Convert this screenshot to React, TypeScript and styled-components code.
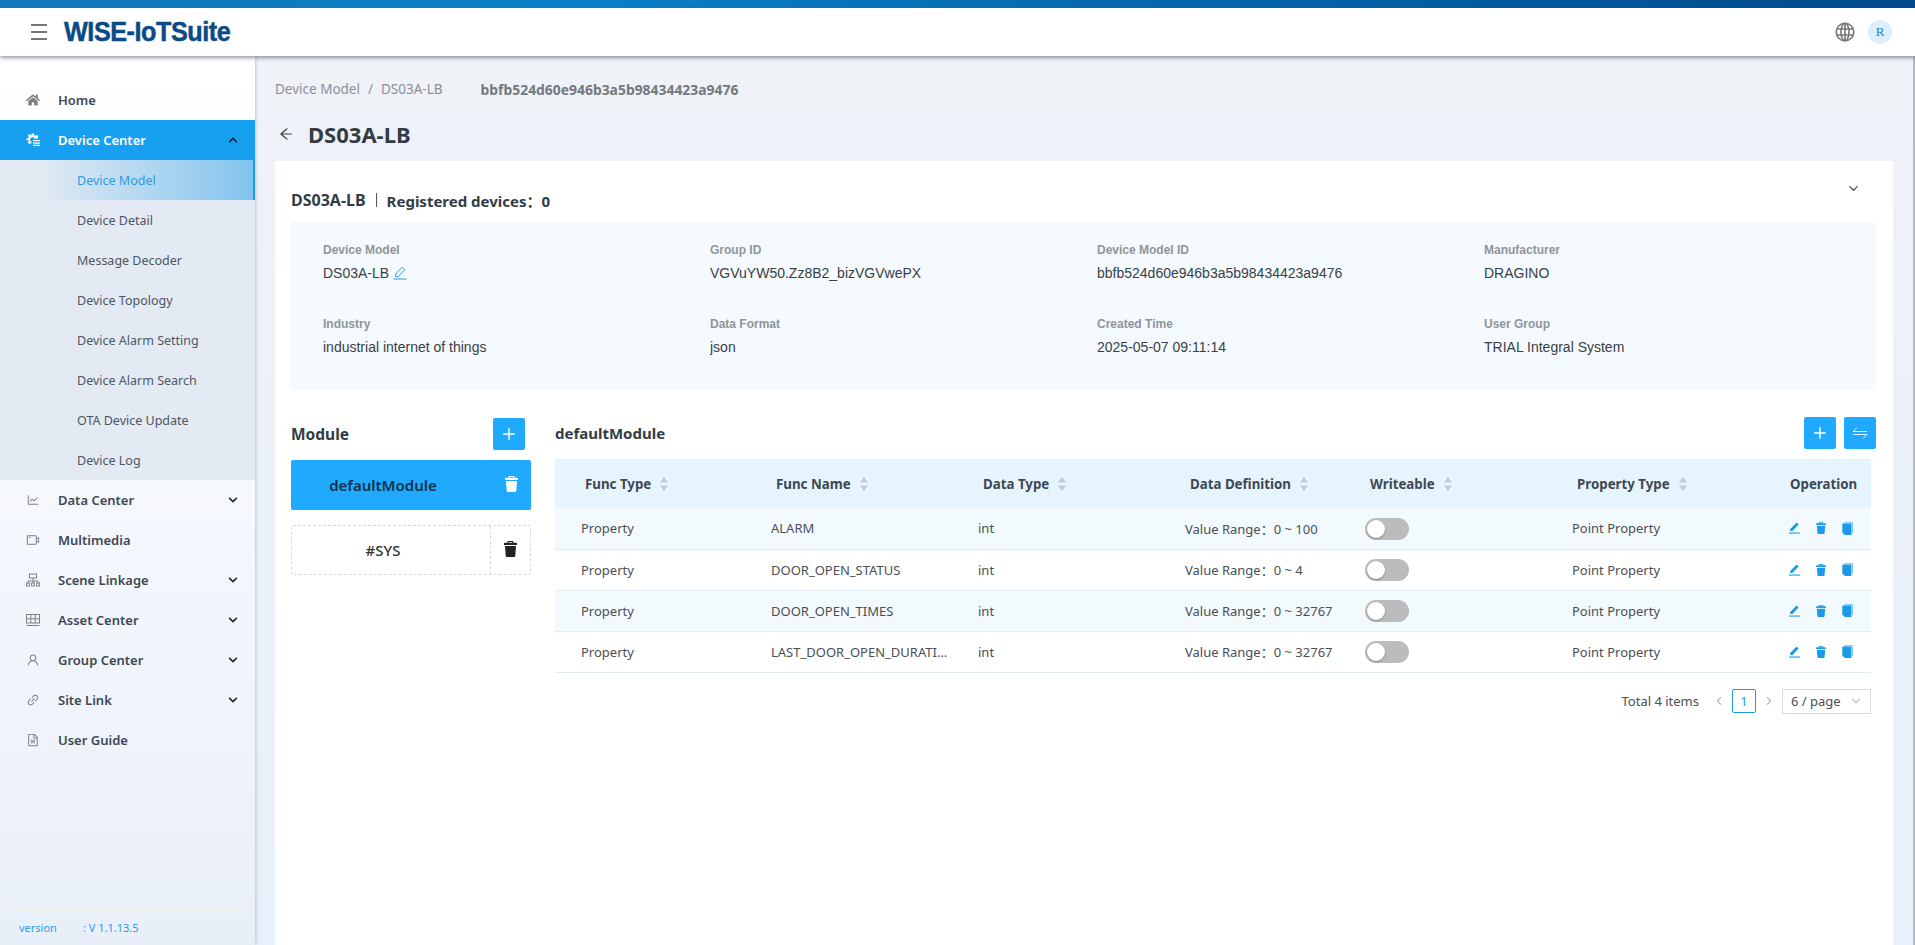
import React from "react";
import styled, { createGlobalStyle } from "styled-components";
import {
  AiOutlineArrowLeft,
  AiOutlineFileWord,
  AiOutlineLineChart,
  AiOutlineLink,
  AiOutlineUser,
  AiOutlineVideoCamera,
} from "react-icons/ai";
import { FaChevronDown, FaChevronUp, FaHome } from "react-icons/fa";
import { LuChevronDown, LuChevronLeft, LuChevronRight, LuPlus } from "react-icons/lu";

const GlobalStyle = createGlobalStyle`
  html, body {
    margin: 0;
    height: 100%;
    overflow: hidden;
  }
  body {
    font-family: "Noto Sans", "Noto Sans CJK SC", sans-serif;
    font-size: 13px;
    color: #444;
  }
  * {
    box-sizing: border-box;
  }
`;

const Page = styled.div`
  height: 945px;
  display: flex;
  flex-direction: column;
  overflow: hidden;
`;

const TopStripe = styled.div`
  height: 8px;
  flex: none;
  background: linear-gradient(90deg, #1379ba 0%, #0a80c8 30%, #004a8c 100%);
`;

const Header = styled.header`
  height: 48px;
  flex: none;
  display: flex;
  align-items: center;
  background: #fff;
  box-shadow: 0 2px 4px rgba(60, 70, 90, 0.55);
  padding: 0 23px 0 31px;
  position: relative;
  z-index: 3;
`;

const Burger = styled.div`
  width: 16px;
  display: flex;
  flex-direction: column;
  gap: 5px;
  margin-right: 17px;
  span {
    display: block;
    height: 2px;
    background: #777;
  }
`;

const Logo = styled.div`
  font-family: "Liberation Sans", sans-serif;
  font-weight: 700;
  font-size: 28px;
  color: #0a4a86;
  -webkit-text-stroke: 0.5px #0a4a86;
  transform: scaleX(0.9);
  transform-origin: left center;
  letter-spacing: -0.5px;
  white-space: nowrap;
`;

const HeaderRight = styled.div`
  margin-left: auto;
  display: flex;
  align-items: center;
  gap: 13px;
`;

const Avatar = styled.div`
  width: 24px;
  height: 24px;
  border-radius: 50%;
  background: #dfeefb;
  color: #1f7fc4;
  font-family: "Liberation Serif", serif;
  font-size: 13px;
  display: flex;
  align-items: center;
  justify-content: center;
`;

const Body = styled.div`
  flex: 1;
  min-height: 0;
  display: flex;
`;

const Sidebar = styled.aside`
  width: 255px;
  flex: none;
  padding-top: 24px;
  display: flex;
  flex-direction: column;
  background: linear-gradient(180deg, #fff 0%, #f4f7fd 55%, #e9eff8 100%);
  box-shadow: 1px 0 3px rgba(90, 110, 140, 0.3);
  position: relative;
  z-index: 2;
`;

const MenuItem = styled.div<{ $active?: boolean }>`
  height: 40px;
  flex: none;
  display: flex;
  align-items: center;
  padding: 0 17px 0 26px;
  font-weight: 600;
  font-size: 13px;
  color: ${(p) => (p.$active ? "#fff" : "#3e4854")};
  background: ${(p) => (p.$active ? "#18a0f0" : "transparent")};
  svg.lead {
    width: 14px;
    height: 14px;
    color: ${(p) => (p.$active ? "#fff" : "#808080")};
    margin-right: 18px;
    flex: none;
  }
  svg.caret {
    width: 10px;
    height: 10px;
    margin-left: auto;
    color: ${(p) => (p.$active ? "#123" : "#1f2933")};
  }
`;

const SubMenu = styled.div`
  background: #e3eaf3;
  display: flex;
  flex-direction: column;
`;

const SubItem = styled.div<{ $active?: boolean }>`
  height: 40px;
  display: flex;
  align-items: center;
  padding-left: 77px;
  font-size: 12.5px;
  color: ${(p) => (p.$active ? "#2b9be6" : "#4d5763")};
  background: ${(p) =>
    p.$active ? "linear-gradient(90deg, rgba(130,196,238,0) 15%, #82c4ee 100%)" : "none"};
  border-right: ${(p) => (p.$active ? "2px solid #1c9ae8" : "none")};
`;

const Version = styled.div`
  margin: auto 12px 2px 19px;
  height: 33px;
  display: flex;
  align-items: center;
  border-top: 1px solid #eef0ea;
  font-size: 11px;
  color: #2b9be6;
  span:first-child {
    width: 64px;
  }
`;

const Main = styled.main`
  flex: 1;
  min-width: 0;
  padding: 0 20px 0 20px;
  background: linear-gradient(180deg, #eff2f7 0%, #e8f0fb 100%);
  border-right: 2px solid #b4b8c2;
  display: flex;
  flex-direction: column;
`;

const Crumbs = styled.div`
  height: 24px;
  margin-top: 21px;
  display: flex;
  align-items: center;
  font-size: 13.5px;
  color: #8a9098;
  flex: none;
`;

const CrumbSep = styled.span`
  margin: 0 8px;
`;

const CrumbId = styled.span`
  margin-left: 38px;
  font-size: 13.9px;
  font-weight: 700;
  color: #73797f;
`;

const PageTitle = styled.div`
  height: 32px;
  margin-top: 17px;
  display: flex;
  align-items: center;
  flex: none;
  font-size: 22px;
  font-weight: 700;
  color: #333c45;
  svg {
    width: 16px;
    height: 16px;
    margin: 0 14px 0 3px;
    color: #444;
  }
`;

const Card = styled.section`
  flex: 1;
  margin-top: 11px;
  background: #fff;
  padding: 27px 17px 0 16px;
`;

const CardHead = styled.div`
  height: 24px;
  display: flex;
  align-items: center;
  font-weight: 700;
  font-size: 15px;
  color: #333c45;
  svg {
    margin-left: auto;
    margin-right: 15px;
    margin-top: -24px;
    width: 15px;
    height: 15px;
    color: #444;
  }
`;

const CardModel = styled.span`
  font-size: 16px;
`;

const CardDivider = styled.span`
  width: 1px;
  height: 14px;
  background: #555;
  margin: 0 10px;
`;

const DetailPanel = styled.div`
  margin-top: 10px;
  height: 168px;
  padding: 18px 0 0 32px;
  background: #f4fafd;
  display: grid;
  grid-template-columns: repeat(4, 387px);
  grid-auto-rows: 74px;
`;

const DetailLabel = styled.div`
  font-family: "Liberation Sans", sans-serif;
  font-size: 12px;
  font-weight: 700;
  line-height: 20px;
  color: #8f959b;
`;

const DetailValue = styled.div`
  margin-top: 3px;
  font-family: "Liberation Sans", sans-serif;
  font-size: 14px;
  line-height: 20px;
  color: #3a3f45;
  display: flex;
  align-items: center;
  gap: 4px;
`;

const Columns = styled.div`
  margin-top: 27px;
  display: flex;
  gap: 24px;
`;

const ModuleColumn = styled.div`
  width: 240px;
  flex: none;
  padding-top: 1px;
`;

const SectionHead = styled.div`
  height: 32px;
  display: flex;
  align-items: center;
  justify-content: space-between;
  font-weight: 700;
  font-size: 15px;
  color: #333c45;
`;

const ModuleHead = styled(SectionHead)`
  padding-right: 6px;
  margin-bottom: 10px;
  font-size: 15.5px;
`;

const BlueButton = styled.button`
  width: 32px;
  height: 32px;
  padding: 0;
  border: 0;
  border-radius: 2px;
  background: #1faaff;
  color: #fff;
  display: flex;
  align-items: center;
  justify-content: center;
  svg {
    width: 18px;
    height: 18px;
  }
`;

const ModuleRow = styled.div<{ $active?: boolean }>`
  height: 50px;
  display: flex;
  margin-bottom: 15px;
  border-radius: 2px;
  color: ${(p) => (p.$active ? "#12304a" : "#333")};
  background: ${(p) => (p.$active ? "#1faaff" : "#fff")};
  border: ${(p) => (p.$active ? "0" : "1px dashed #d9d9d9")};
  font-size: 15px;
  font-weight: ${(p) => (p.$active ? 600 : 500)};
`;

const ModuleName = styled.div`
  flex: 1;
  display: flex;
  align-items: center;
  justify-content: center;
  padding-right: 16px;
`;

const ModuleDelete = styled.div<{ $active?: boolean }>`
  width: 40px;
  flex: none;
  display: flex;
  align-items: center;
  justify-content: center;
  padding-bottom: 3px;
  border-left: ${(p) => (p.$active ? "1px solid #1ea4f5" : "1px dashed #d9d9d9")};
`;

const TableColumn = styled.div`
  flex: 1;
  min-width: 0;
`;

const HeadButtons = styled.div`
  display: flex;
  gap: 8px;
`;

const TableHeadRow = styled(SectionHead)`
  margin-bottom: 10px;
`;

const Table = styled.table`
  width: 1316px;
  table-layout: fixed;
  border-collapse: collapse;
`;

const Th = styled.th`
  height: 49px;
  padding: 0 0 0 5px;
  text-align: left;
  font-size: 13.3px;
  font-weight: 700;
  color: #3e4854;
  background: #e6f4fd;
  &:first-child {
    padding-left: 30px;
  }
  &:last-child {
    padding-left: 10px;
  }
`;

const ThInner = styled.span`
  display: inline-flex;
  align-items: center;
  gap: 9px;
`;

const Tr = styled.tr<{ $odd: boolean }>`
  background: ${(p) => (p.$odd ? "#f3fafe" : "#fff")};
`;

const Td = styled.td`
  height: 41px;
  padding: 0;
  font-size: 13px;
  color: #4a4f55;
  border-bottom: 1px solid #e3eaf0;
  &:first-child {
    padding-left: 26px;
  }
`;

const Clip = styled.div`
  max-width: 181px;
  white-space: nowrap;
  overflow: hidden;
  text-overflow: ellipsis;
`;

const Toggle = styled.div`
  width: 44px;
  height: 22px;
  margin-top: 1px;
  border-radius: 11px;
  background: #bcbcbc;
  position: relative;
  &::after {
    content: "";
    position: absolute;
    left: 2px;
    top: 2px;
    width: 18px;
    height: 18px;
    border-radius: 50%;
    background: #fff;
    box-shadow: 0 1px 2px rgba(0, 0, 0, 0.3);
  }
`;

const Ops = styled.div`
  display: flex;
  align-items: center;
  gap: 16px;
  padding-left: 9px;
  color: #1c9ae8;
`;

const Pager = styled.div`
  width: 1316px;
  margin-top: 16px;
  display: flex;
  align-items: center;
  justify-content: flex-end;
  font-size: 13px;
  color: #4a4f55;
`;

const PagerArrow = styled.span`
  display: flex;
  color: #b5b9be;
  margin: 0 6px;
  svg {
    width: 14px;
    height: 14px;
  }
`;

const PagerPrev = styled(PagerArrow)`
  margin-left: 13px;
`;

const PagerCurrent = styled.div`
  width: 24px;
  height: 24px;
  border: 1px solid #1c9ae8;
  border-radius: 2px;
  color: #1c9ae8;
  display: flex;
  align-items: center;
  justify-content: center;
`;

const PageSize = styled.div`
  width: 89px;
  height: 25px;
  padding: 0 7px 0 8px;
  border: 1px solid #d9d9d9;
  display: flex;
  align-items: center;
  justify-content: space-between;
  svg {
    width: 14px;
    height: 14px;
    color: #c0c4c8;
  }
`;

const Globe = () => (
  <svg width="20" height="20" viewBox="0 0 20 20" fill="none" stroke="#777" strokeWidth="1.6">
    <circle cx="10" cy="10" r="8.8" />
    <ellipse cx="10" cy="10" rx="4" ry="8.8" />
    <path d="M10 1.2v17.6M2 7h16M2 13h16" />
  </svg>
);

const GearLines = () => (
  <svg className="lead" viewBox="0 0 14 14" fill="currentColor">
    <path d="M6 .6h2l.3 1.6 1.3.6 1.4-.9 1.4 1.4-.9 1.4.4 1.1H8.9A2.5 2.5 0 1 0 5.6 9v1.6l-1-.4-1.4.9-1.4-1.4.9-1.4-.6-1.3L.5 7.5v-2l1.6-.3.6-1.3-.9-1.4L3.2 1.1l1.4.9 1.1-.5z" />
    <path d="M7 7h7v1.3H7zM7 9.4h7v1.3H7zM7 11.8h7v1.3H7z" />
  </svg>
);

const TreeIcon = () => (
  <svg className="lead" viewBox="0 0 14 14" fill="none" stroke="currentColor" strokeWidth="1">
    <rect x="3.5" y="1" width="7" height="4" />
    <path d="M7 5v3M2 10V8h10v2M7 8v2" />
    <rect x="0.6" y="10" width="2.8" height="3" />
    <rect x="5.6" y="10" width="2.8" height="3" />
    <rect x="10.6" y="10" width="2.8" height="3" />
  </svg>
);

const GridIcon = () => (
  <svg className="lead" viewBox="0 0 14 14" fill="none" stroke="currentColor" strokeWidth="1">
    <rect x="0.5" y="1.5" width="13" height="8.5" />
    <path d="M0.5 5.8h13M4.8 1.5v8.5M9.2 1.5v8.5M0.5 12.5h13" />
  </svg>
);

const OutlinePen = () => (
  <svg width="14" height="14" viewBox="0 0 14 14" fill="none" stroke="#1c9ae8" strokeWidth="1">
    <path d="M9.2 1.2l2.6 2.4-6.6 7H2.6V8z" />
    <path d="M0.5 13h13" />
  </svg>
);

const Trash = ({ w, h, color }: { w: number; h: number; color: string }) => (
  <svg width={w} height={h} viewBox="0 0 13 16" fill={color}>
    <path d="M4.5 0h4a1 1 0 0 1 1 1v.8h2.6a.9.9 0 0 1 .9.9V4H0V2.7a.9.9 0 0 1 .9-.9h2.6V1a1 1 0 0 1 1-1zm.2 1v.8h3.6V1z" />
    <path d="M1 5h11l-.7 9.8a1.3 1.3 0 0 1-1.3 1.2H3a1.3 1.3 0 0 1-1.3-1.2z" />
  </svg>
);

const SolidPen = () => (
  <svg width="11" height="12" viewBox="0 0 11 12" fill="currentColor">
    <path d="M7.6.6l2 1.8L3.4 9H1.2V6.9z" />
    <rect x="0" y="10.5" width="11" height="1.1" />
  </svg>
);

const CopyBook = () => (
  <svg width="11" height="13" viewBox="0 0 11 13" fill="currentColor">
    <path d="M2.5 0H10.5a.5.5 0 0 1 .5.5V11h-1V1.3H2.5z" opacity="0.55" />
    <path d="M.8 1.5H9a.5.5 0 0 1 .5.5V12.500a.5.5 0 0 1-.5.5H3L.3 10.800V2a.5.5 0 0 1 .5-.5z" />
  </svg>
);

const Swap = () => (
  <svg viewBox="0 0 18 18" fill="none" stroke="currentColor" strokeWidth="1" opacity="0.9">
    <path d="M6 3.5L2 7.5H16M2 10.5H16L12 14.5" />
  </svg>
);

const Sorter = () => (
  <svg width="8" height="14" viewBox="0 0 8 14" fill="#c3cad2">
    <path d="M4 0l4 5.5H0zM4 14l4-5.5H0z" />
  </svg>
);

const subItems = [
  "Device Model",
  "Device Detail",
  "Message Decoder",
  "Device Topology",
  "Device Alarm Setting",
  "Device Alarm Search",
  "OTA Device Update",
  "Device Log",
];

const lowerMenu = [
  { label: "Data Center", icon: <AiOutlineLineChart className="lead" />, caret: true },
  { label: "Multimedia", icon: <AiOutlineVideoCamera className="lead" />, caret: false },
  { label: "Scene Linkage", icon: <TreeIcon />, caret: true },
  { label: "Asset Center", icon: <GridIcon />, caret: true },
  { label: "Group Center", icon: <AiOutlineUser className="lead" />, caret: true },
  { label: "Site Link", icon: <AiOutlineLink className="lead" />, caret: true },
  { label: "User Guide", icon: <AiOutlineFileWord className="lead" />, caret: false },
];

const details = [
  ["Device Model", "DS03A-LB"],
  ["Group ID", "VGVuYW50.Zz8B2_bizVGVwePX"],
  ["Device Model ID", "bbfb524d60e946b3a5b98434423a9476"],
  ["Manufacturer", "DRAGINO"],
  ["Industry", "industrial internet of things"],
  ["Data Format", "json"],
  ["Created Time", "2025-05-07 09:11:14"],
  ["User Group", "TRIAL Integral System"],
];

const columns = [
  { title: "Func Type", width: 216, sort: true },
  { title: "Func Name", width: 207, sort: true },
  { title: "Data Type", width: 207, sort: true },
  { title: "Data Definition", width: 180, sort: true },
  { title: "Writeable", width: 207, sort: true },
  { title: "Property Type", width: 208, sort: true },
  { title: "Operation", width: 91, sort: false },
];

const funcs = [
  { name: "ALARM", range: "0 ~ 100" },
  { name: "DOOR_OPEN_STATUS", range: "0 ~ 4" },
  { name: "DOOR_OPEN_TIMES", range: "0 ~ 32767" },
  { name: "LAST_DOOR_OPEN_DURATION", range: "0 ~ 32767" },
];

const App = () => {
  return (
    <Page>
      <GlobalStyle />
      <TopStripe />
      <Header>
        <Burger>
          <span />
          <span />
          <span />
        </Burger>
        <Logo>WISE-IoTSuite</Logo>
        <HeaderRight>
          <Globe />
          <Avatar>R</Avatar>
        </HeaderRight>
      </Header>
      <Body>
        <Sidebar>
          <MenuItem>
            <FaHome className="lead" />
            Home
          </MenuItem>
          <MenuItem $active>
            <GearLines />
            Device Center
            <FaChevronUp className="caret" />
          </MenuItem>
          <SubMenu>
            {subItems.map((item, i) => (
              <SubItem key={item} $active={i === 0}>
                {item}
              </SubItem>
            ))}
          </SubMenu>
          {lowerMenu.map((item) => (
            <MenuItem key={item.label}>
              {item.icon}
              {item.label}
              {item.caret && <FaChevronDown className="caret" />}
            </MenuItem>
          ))}
          <Version>
            <span>version</span>
            <span>: V 1.1.13.5</span>
          </Version>
        </Sidebar>
        <Main>
          <Crumbs>
            Device Model
            <CrumbSep>/</CrumbSep>
            DS03A-LB
            <CrumbId>bbfb524d60e946b3a5b98434423a9476</CrumbId>
          </Crumbs>
          <PageTitle>
            <AiOutlineArrowLeft />
            DS03A-LB
          </PageTitle>
          <Card>
            <CardHead>
              <CardModel>DS03A-LB</CardModel>
              <CardDivider />
              Registered devices：0
              <LuChevronDown />
            </CardHead>
            <DetailPanel>
              {details.map(([label, value], i) => (
                <div key={label}>
                  <DetailLabel>{label}</DetailLabel>
                  <DetailValue>
                    {value}
                    {i === 0 && <OutlinePen />}
                  </DetailValue>
                </div>
              ))}
            </DetailPanel>
            <Columns>
              <ModuleColumn>
                <ModuleHead>
                  Module
                  <BlueButton>
                    <LuPlus />
                  </BlueButton>
                </ModuleHead>
                <ModuleRow $active>
                  <ModuleName>defaultModule</ModuleName>
                  <ModuleDelete $active>
                    <Trash w={13} h={16} color="#fff" />
                  </ModuleDelete>
                </ModuleRow>
                <ModuleRow>
                  <ModuleName>#SYS</ModuleName>
                  <ModuleDelete>
                    <Trash w={13} h={16} color="#222" />
                  </ModuleDelete>
                </ModuleRow>
              </ModuleColumn>
              <TableColumn>
                <TableHeadRow>
                  defaultModule
                  <HeadButtons>
                    <BlueButton>
                      <LuPlus />
                    </BlueButton>
                    <BlueButton>
                      <Swap />
                    </BlueButton>
                  </HeadButtons>
                </TableHeadRow>
                <Table>
                  <colgroup>
                    {columns.map((c) => (
                      <col key={c.title} width={c.width} />
                    ))}
                  </colgroup>
                  <thead>
                    <tr>
                      {columns.map((c) => (
                        <Th key={c.title}>
                          <ThInner>
                            {c.title}
                            {c.sort && <Sorter />}
                          </ThInner>
                        </Th>
                      ))}
                    </tr>
                  </thead>
                  <tbody>
                    {funcs.map((f, i) => (
                      <Tr key={f.name} $odd={i % 2 === 0}>
                        <Td>Property</Td>
                        <Td>
                          <Clip>{f.name}</Clip>
                        </Td>
                        <Td>int</Td>
                        <Td>Value Range：{f.range}</Td>
                        <Td>
                          <Toggle />
                        </Td>
                        <Td>Point Property</Td>
                        <Td>
                          <Ops>
                            <SolidPen />
                            <Trash w={10} h={12} color="currentColor" />
                            <CopyBook />
                          </Ops>
                        </Td>
                      </Tr>
                    ))}
                  </tbody>
                </Table>
                <Pager>
                  Total 4 items
                  <PagerPrev>
                    <LuChevronLeft />
                  </PagerPrev>
                  <PagerCurrent>1</PagerCurrent>
                  <PagerArrow>
                    <LuChevronRight />
                  </PagerArrow>
                  <PageSize>
                    6 / page
                    <LuChevronDown />
                  </PageSize>
                </Pager>
              </TableColumn>
            </Columns>
          </Card>
        </Main>
      </Body>
    </Page>
  );
};

export default App;
